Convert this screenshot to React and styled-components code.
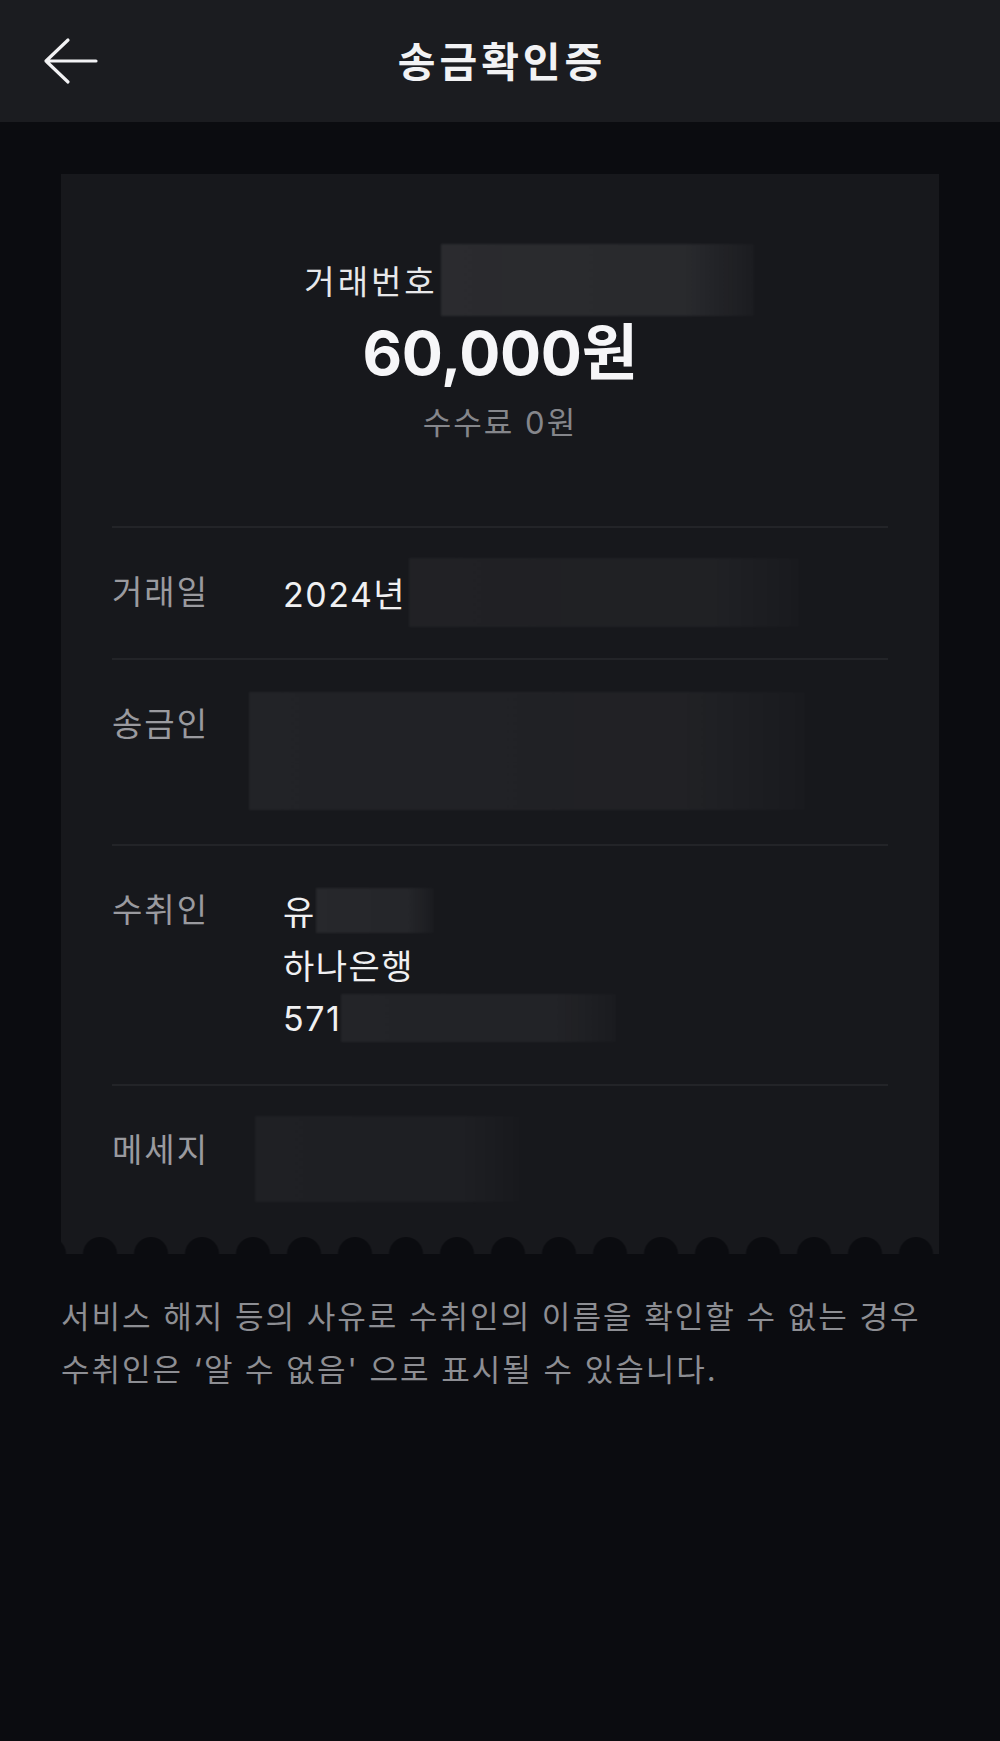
import React from 'react'
import styled, { createGlobalStyle } from 'styled-components'

const GlobalStyle = createGlobalStyle`
  html, body {
    margin: 0;
    padding: 0;
    background: #0b0c10;
  }
  body {
    font-family: Inter, "Noto Sans CJK KR", "Noto Sans", sans-serif;
    -webkit-font-smoothing: antialiased;
  }
`;

const Page = styled.div`
  min-height: 1741px;
  background: #0b0c10;
  display: flex;
  flex-direction: column;
`;

const Header = styled.header`
  height: 122px;
  background: #1b1c20;
  display: grid;
  grid-template-columns: 1fr auto 1fr;
  align-items: center;
`;

const BackButton = styled.button`
  justify-self: start;
  margin-left: 42px;
  padding: 0;
  width: 60px;
  height: 60px;
  display: flex;
  align-items: center;
  background: none;
  border: none;
  cursor: pointer;
`;

const Title = styled.h1`
  margin: 0 0 0 4px;
  font-size: 41px;
  font-weight: 700;
  color: #f2f2f4;
  letter-spacing: 4px;
  line-height: 1;
  padding-top: 2px;
`;

const Content = styled.main`
  padding: 52px 61px 0;
`;

const Card = styled.section`
  background: #17181c;
  padding: 79px 51px 0;
  display: flex;
  flex-direction: column;
`;

const Summary = styled.div`
  display: flex;
  flex-direction: column;
  align-items: center;
  margin-bottom: 73px;
`;

const TxnLine = styled.div`
  display: flex;
  align-items: center;
  height: 54px;
  font-size: 33px;
  letter-spacing: 3px;
  color: #e8e8ea;
`;

const Amount = styled.div`
  margin-top: 6px;
  font-size: 61px;
  line-height: 80px;
  font-weight: 700;
  color: #f6f6f8;
  letter-spacing: -0.3px;
`;

const Fee = styled.div`
  font-size: 31px;
  line-height: 60px;
  letter-spacing: 2px;
  color: #85868b;
`;

const Row = styled.div`
  display: grid;
  grid-template-columns: 171px 1fr;
  border-top: 2px solid #232428;
  padding: 37px 0 39px;
`;

const Label = styled.div`
  font-size: 33px;
  line-height: 54px;
  letter-spacing: 2px;
  color: #9a9a9f;
`;

const Values = styled.div`
  display: flex;
  flex-direction: column;
`;

const ValueLine = styled.div`
  display: flex;
  align-items: center;
  height: 54px;
  font-size: 34px;
  letter-spacing: 1.5px;
  color: #f0f0f2;
  white-space: nowrap;
`;

const Redact = styled.span`
  display: block;
  flex: none;
  width: ${(p) => p.$w}px;
  height: ${(p) => p.$h}px;
  margin: ${(p) => p.$dy || 0}px ${(p) => p.$mr || 0}px ${(p) => p.$mb || 0}px ${(p) => p.$dx || 0}px;
  background: linear-gradient(
    90deg,
    rgba(255, 255, 255, ${(p) => p.$tone}) 0%,
    rgba(255, 255, 255, ${(p) => p.$tone * 0.9}) 78%,
    rgba(255, 255, 255, ${(p) => p.$tone * 0.25}) 100%
  );
  filter: blur(0.8px);
`;

const Scallop = styled.div`
  height: 38px;
  margin: 0 -51px;
  background-image: radial-gradient(circle at 50% 100%, #0b0c10 16.5px, rgba(11, 12, 16, 0) 17.5px);
  background-size: 51px 38px;
  background-position: 13.5px bottom;
  background-repeat: repeat-x;
`;

const Notice = styled.p`
  margin: 36px 0 0;
  font-size: 31px;
  line-height: 53px;
  color: #8d8e93;
  white-space: nowrap;
  letter-spacing: 2px;
`;

const BackIcon = () => (
  <svg width="56" height="48" viewBox="0 0 56 48" fill="none">
    <path
      d="M26 3 L4 24 L26 45 M4 24 H54"
      stroke="#f2f2f4"
      strokeWidth="3.2"
      strokeLinecap="round"
      strokeLinejoin="round"
    />
  </svg>
);

export default function App() {
  return (
    <Page>
      <GlobalStyle />
      <Header>
        <BackButton aria-label="뒤로">
          <BackIcon />
        </BackButton>
        <Title>송금확인증</Title>
        <span />
      </Header>

      <Content>
        <Card>
          <Summary>
            <TxnLine>
              거래번호
              <Redact $w={313} $h={72} $dx={3} $mr={-58} $tone={0.085} />
            </TxnLine>
            <Amount>60,000원</Amount>
            <Fee>수수료 0원</Fee>
          </Summary>

          <Row>
            <Label>거래일</Label>
            <Values>
              <ValueLine>
                2024년
                <Redact $w={390} $h={69} $dx={3} $tone={0.045} />
              </ValueLine>
            </Values>
          </Row>

          <Row>
            <Label>송금인</Label>
            <Values>
              <Redact $w={556} $h={118} $dx={-34} $dy={-5} $mb={-5} $tone={0.05} />
            </Values>
          </Row>

          <Row>
            <Label>수취인</Label>
            <Values>
              <ValueLine>
                유
                <Redact $w={118} $h={45} $tone={0.07} />
              </ValueLine>
              <ValueLine>하나은행</ValueLine>
              <ValueLine>
                571
                <Redact $w={275} $h={48} $tone={0.055} />
              </ValueLine>
            </Values>
          </Row>

          <Row>
            <Label>메세지</Label>
            <Values>
              <ValueLine>
                <Redact $w={265} $h={86} $dx={-28} $dy={18} $tone={0.035} />
              </ValueLine>
            </Values>
          </Row>

          <Scallop />
        </Card>

        <Notice>
          서비스 해지 등의 사유로 수취인의 이름을 확인할 수 없는 경우
          <br />
          수취인은 ‘알 수 없음' 으로 표시될 수 있습니다.
        </Notice>
      </Content>
    </Page>
  );
}
